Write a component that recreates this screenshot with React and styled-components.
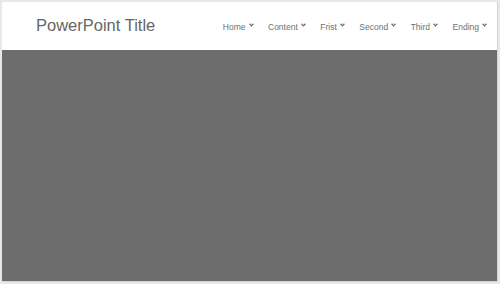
import React from 'react'
import styled, { createGlobalStyle } from 'styled-components';

const GlobalStyle = createGlobalStyle`
    html, body {
        margin: 0;
        padding: 0;
        background: #e8e8e8;
        font-family: "Liberation Sans", Arial, sans-serif;
    }
`

const Frame = styled.div`
    box-sizing: border-box;
    width: 500px;
    height: 284px;
    padding: 2px 2px 2px 2px;
    display: flex;
    flex-direction: column;
`

const Slide = styled.div`
    flex: 1;
    display: flex;
    flex-direction: column;
    border: 1px solid #d4d4d4;
    border-top: none;
    border-left: none;
`

const Header = styled.div`
    height: 48px;
    background: #ffffff;
    display: flex;
    flex-direction: row;
    align-items: center;
    justify-content: space-between;
    padding: 0 10px 0 34px;
`

const Title = styled.h1`
    margin: 0 0 2px 0;
    font-size: 16.5px;
    font-weight: normal;
    color: #666666;
`

const Nav = styled.nav`
    display: flex;
    flex-direction: row;
    align-items: center;
    gap: 14.5px;
    margin-top: 1px;
`

const NavItem = styled.span`
    display: flex;
    flex-direction: row;
    align-items: flex-start;
    gap: 3px;
    font-size: 8.5px;
    color: #707070;
    line-height: 10px;
`

const Chevron = styled.svg`
    width: 5px;
    height: 4px;
    margin-top: 1px;
`

const Canvas = styled.div`
    flex: 1;
    background: #6d6d6d;
`

const items = ['Home', 'Content', 'Frist', 'Second', 'Third', 'Ending'];

export default function App() {
    return (
        <Frame>
            <GlobalStyle />
            <Slide>
                <Header>
                    <Title>PowerPoint Title</Title>
                    <Nav>
                        {items.map(item => (
                            <NavItem key={item}>
                                {item}
                                <Chevron viewBox="0 0 5 4">
                                    <polyline points="0.6,0.8 2.5,2.9 4.4,0.8" fill="none" stroke="#707070" strokeWidth="1.3" />
                                </Chevron>
                            </NavItem>
                        ))}
                    </Nav>
                </Header>
                <Canvas />
            </Slide>
        </Frame>
    )
}
